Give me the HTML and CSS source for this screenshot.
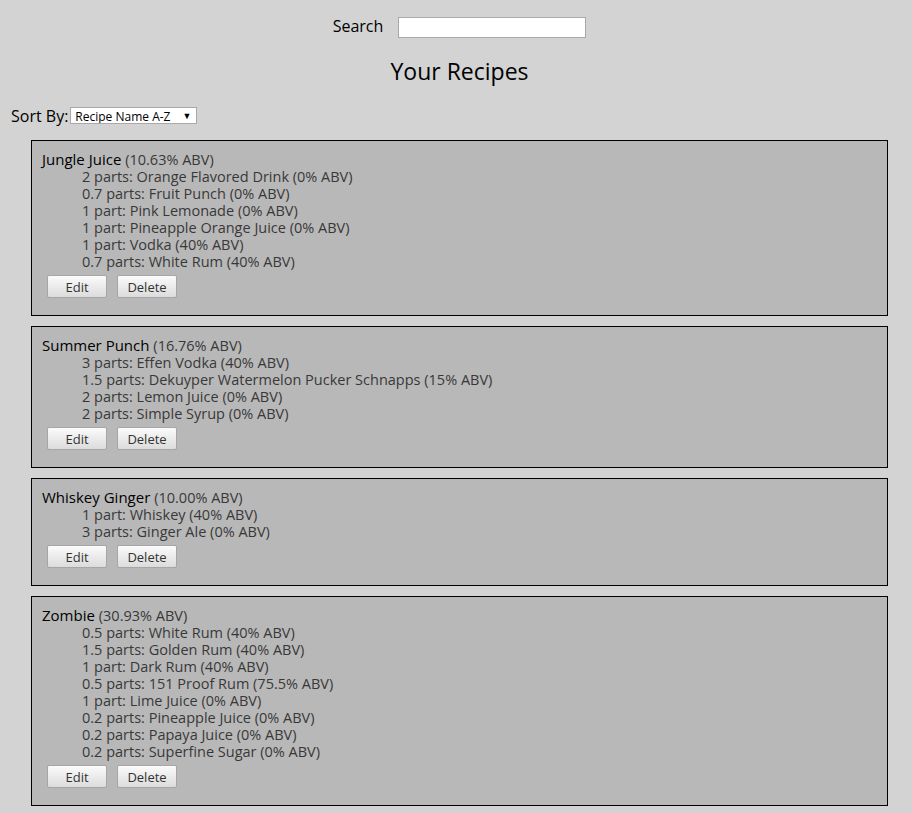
FILE: index.html
```html
<!DOCTYPE html>
<html>
<head>
<meta charset="utf-8">
<title>Your Recipes</title>
<link rel="stylesheet" href="styles.css">
</head>
<body>
<div class="search-row">
  <label class="search-label" for="search">Search</label>
  <input id="search" class="search-input" type="text">
</div>
<h2 class="page-title">Your Recipes</h2>
<div class="sort-row">
  <span class="sort-label">Sort By:</span>
  <span class="select-wrap">
    <select class="sort-select">
      <option>Recipe Name A-Z</option>
    </select>
  </span>
</div>

<div class="recipe">
  <div class="recipe-title">Jungle Juice <span class="abv">(10.63% ABV)</span></div>
  <ul class="ingredients">
    <li>2 parts: Orange Flavored Drink (0% ABV)</li>
    <li>0.7 parts: Fruit Punch (0% ABV)</li>
    <li>1 part: Pink Lemonade (0% ABV)</li>
    <li>1 part: Pineapple Orange Juice (0% ABV)</li>
    <li>1 part: Vodka (40% ABV)</li>
    <li>0.7 parts: White Rum (40% ABV)</li>
  </ul>
  <div class="actions"><button class="btn">Edit</button><button class="btn">Delete</button></div>
</div>

<div class="recipe">
  <div class="recipe-title">Summer Punch <span class="abv">(16.76% ABV)</span></div>
  <ul class="ingredients">
    <li>3 parts: Effen Vodka (40% ABV)</li>
    <li>1.5 parts: Dekuyper Watermelon Pucker Schnapps (15% ABV)</li>
    <li>2 parts: Lemon Juice (0% ABV)</li>
    <li>2 parts: Simple Syrup (0% ABV)</li>
  </ul>
  <div class="actions"><button class="btn">Edit</button><button class="btn">Delete</button></div>
</div>

<div class="recipe">
  <div class="recipe-title">Whiskey Ginger <span class="abv">(10.00% ABV)</span></div>
  <ul class="ingredients">
    <li>1 part: Whiskey (40% ABV)</li>
    <li>3 parts: Ginger Ale (0% ABV)</li>
  </ul>
  <div class="actions"><button class="btn">Edit</button><button class="btn">Delete</button></div>
</div>

<div class="recipe">
  <div class="recipe-title">Zombie <span class="abv">(30.93% ABV)</span></div>
  <ul class="ingredients">
    <li>0.5 parts: White Rum (40% ABV)</li>
    <li>1.5 parts: Golden Rum (40% ABV)</li>
    <li>1 part: Dark Rum (40% ABV)</li>
    <li>0.5 parts: 151 Proof Rum (75.5% ABV)</li>
    <li>1 part: Lime Juice (0% ABV)</li>
    <li>0.2 parts: Pineapple Juice (0% ABV)</li>
    <li>0.2 parts: Papaya Juice (0% ABV)</li>
    <li>0.2 parts: Superfine Sugar (0% ABV)</li>
  </ul>
  <div class="actions"><button class="btn">Edit</button><button class="btn">Delete</button></div>
</div>
</body>
</html>
```
FILE: styles.css
```css
html {
  overflow: hidden;
  background: #d3d3d3;
}
body {
  margin: 8px;
  width: 903px;
  font-family: "Open Sans", "Noto Sans", sans-serif;
  color: #000;
  background: #d3d3d3;
}
.search-row {
  display: flex;
  justify-content: center;
  align-items: center;
  gap: 15px;
  margin-top: 9px;
  height: 21px;
}
.search-label {
  font-size: 16px;
  line-height: 19px;
  margin-top: -2px;
}
.search-input {
  box-sizing: border-box;
  width: 188px;
  height: 21px;
  margin: 0;
  border: 1px solid #a9a9a9;
  background: #fff;
  padding: 0 4px;
}
.page-title {
  text-align: center;
  font-weight: normal;
  font-size: 23px;
  line-height: 30px;
  margin: 18px 0 0;
}
.sort-row {
  display: flex;
  align-items: center;
  gap: 2px;
  margin: 21px 0 0 3px;
  height: 17px;
}
.sort-label {
  font-size: 16px;
}
.select-wrap {
  position: relative;
  display: inline-block;
  height: 17px;
}
.select-wrap::after {
  content: "\25BC";
  position: absolute;
  right: 6px;
  top: 3px;
  font-size: 9px;
  line-height: 11px;
  color: #000;
  pointer-events: none;
}
.sort-select {
  display: block;
  appearance: none;
  -webkit-appearance: none;
  box-sizing: border-box;
  width: 127px;
  height: 17px;
  margin: 0;
  padding: 0 4px;
  border: 1px solid #a9a9a9;
  border-radius: 0;
  background: #fff;
  font-family: inherit;
  font-size: 12px;
  color: #000;
}
.recipe {
  margin: 16px 23px 0;
  border: 1px solid #000;
  background: #b8b8b8;
  padding: 10px 10px 17px;
}
.recipe + .recipe {
  margin-top: 10px;
}
.recipe-title {
  font-size: 15px;
  line-height: 17px;
}
.abv {
  color: #383838;
  font-size: 14.5px;
}
.ingredients {
  list-style: none;
  margin: 0;
  padding: 0 0 0 40px;
  font-size: 14.5px;
  line-height: 17px;
  color: #383838;
}
.actions {
  display: flex;
  gap: 10px;
  margin: 5px 0 0 5px;
}
.btn {
  box-sizing: border-box;
  width: 60px;
  height: 23px;
  margin: 0;
  padding: 0;
  border: 1px solid #a6a6a6;
  border-radius: 2px;
  background: linear-gradient(#fbfbfb, #dcdcdc);
  font-family: inherit;
  font-size: 13px;
  color: #333;
}
```
